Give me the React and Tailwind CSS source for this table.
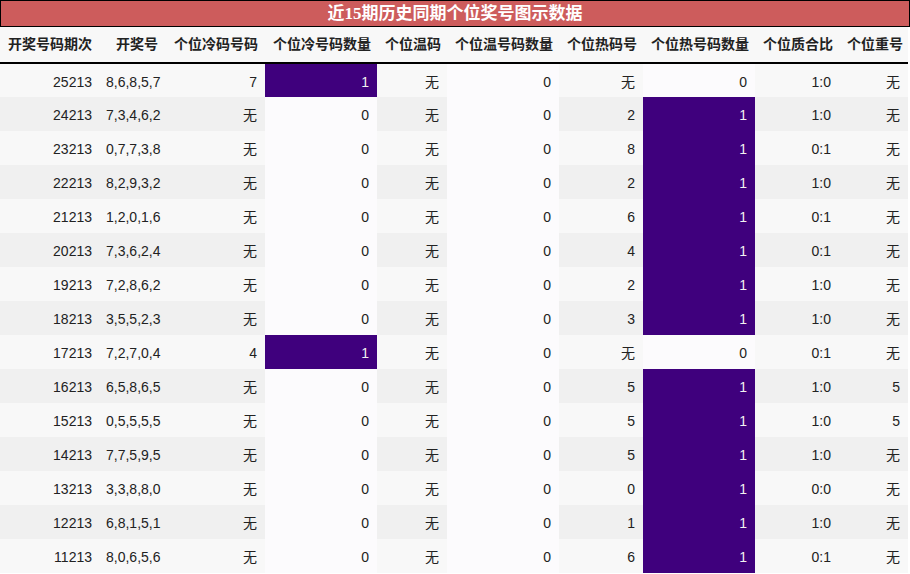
const rows = [
  ['25213', '8,6,8,5,7', '7', 1, '无', 0, '无', 0, '1:0', '无'],
  ['24213', '7,3,4,6,2', '无', 0, '无', 0, '2', 1, '1:0', '无'],
  ['23213', '0,7,7,3,8', '无', 0, '无', 0, '8', 1, '0:1', '无'],
  ['22213', '8,2,9,3,2', '无', 0, '无', 0, '2', 1, '1:0', '无'],
  ['21213', '1,2,0,1,6', '无', 0, '无', 0, '6', 1, '0:1', '无'],
  ['20213', '7,3,6,2,4', '无', 0, '无', 0, '4', 1, '0:1', '无'],
  ['19213', '7,2,8,6,2', '无', 0, '无', 0, '2', 1, '1:0', '无'],
  ['18213', '3,5,5,2,3', '无', 0, '无', 0, '3', 1, '1:0', '无'],
  ['17213', '7,2,7,0,4', '4', 1, '无', 0, '无', 0, '0:1', '无'],
  ['16213', '6,5,8,6,5', '无', 0, '无', 0, '5', 1, '1:0', '5'],
  ['15213', '0,5,5,5,5', '无', 0, '无', 0, '5', 1, '1:0', '5'],
  ['14213', '7,7,5,9,5', '无', 0, '无', 0, '5', 1, '1:0', '无'],
  ['13213', '3,3,8,8,0', '无', 0, '无', 0, '0', 1, '0:0', '无'],
  ['12213', '6,8,1,5,1', '无', 0, '无', 0, '1', 1, '1:0', '无'],
  ['11213', '8,0,6,5,6', '无', 0, '无', 0, '6', 1, '0:1', '无'],
];

const headers = [
  '开奖号码期次', '开奖号', '个位冷码号码', '个位冷号码数量', '个位温码',
  '个位温号码数量', '个位热码号', '个位热号码数量', '个位质合比', '个位重号',
];

const widths = [100, 66, 99, 112, 70, 112, 84, 112, 84, 69];
const countCols = [3, 5, 7];

function cellClass(ci, ri, v) {
  if (countCols.includes(ci)) {
    return v === 1 ? 'bg-[#3f007d] text-[#f1f1f1]' : 'bg-[#fcfbfd] text-[#222]';
  }
  return ri % 2 === 0 ? 'bg-[#f8f8f8] text-[#222]' : 'bg-[#f0f0f0] text-[#222]';
}

export default function App() {
  return (
    <div className="w-[910px] h-[574px] bg-white overflow-hidden" style={{ fontFamily: '"Liberation Sans", "Noto Sans CJK SC", sans-serif' }}>
      <div
        className="h-[27px] bg-[#cd5c5c] border border-black flex items-center justify-center text-white font-bold text-[17px]"
        style={{ fontFamily: '"Liberation Serif", "Noto Sans CJK SC", serif' }}
      >
        近15期历史同期个位奖号图示数据
      </div>
      <table className="table-fixed border-collapse w-[908px] text-[14px]">
        <colgroup>
          {widths.map((w, i) => (
            <col key={i} style={{ width: w }} />
          ))}
        </colgroup>
        <thead>
          <tr className="h-[36px] border-b-2 border-black bg-[#f8f8f8]">
            {headers.map((h, i) => (
              <th key={i} className="text-right font-bold text-[#222] px-2 whitespace-nowrap">
                {h}
              </th>
            ))}
          </tr>
        </thead>
        <tbody>
          {rows.map((r, ri) => (
            <tr key={ri} className="h-[34px]">
              {r.map((v, ci) => (
                <td key={ci} className={`text-right px-2 pt-[3px] whitespace-nowrap ${cellClass(ci, ri, v)} ${ci === 1 ? 'text-left pl-[6px]' : ''}`}>
                  {v}
                </td>
              ))}
            </tr>
          ))}
        </tbody>
      </table>
    </div>
  );
}
